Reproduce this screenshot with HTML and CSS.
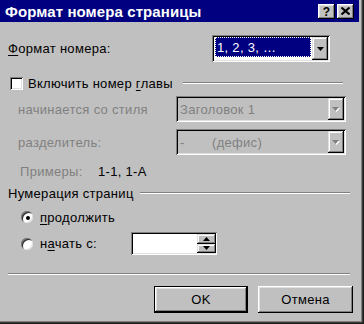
FILE: index.html
```html
<!DOCTYPE html>
<html lang="ru">
<head>
<meta charset="utf-8">
<title>Формат номера страницы</title>
<link rel="stylesheet" href="styles.css">
</head>
<body>
<div class="window">
  <div class="titlebar">
    <span class="title">Формат номера страницы</span>
    <div class="tb-buttons">
      <span class="tb-btn tb-help">?</span>
      <span class="tb-btn tb-close">
        <svg width="9" height="8" viewBox="0 0 9 8"><path d="M0.5 0.5L8.5 7.5M8.5 0.5L0.5 7.5" stroke="#000" stroke-width="2"/></svg>
      </span>
    </div>
  </div>
  <div class="content">
    <div class="row row-format">
      <span class="label-format"><u>Ф</u>ормат номера:</span>
      <div class="combo combo-focus">
        <div class="combo-field"><span class="sel">1, 2, 3, …</span></div>
        <div class="drop"><svg width="7" height="4" viewBox="0 0 7 4"><polygon points="0,0 7,0 3.5,4" fill="#000"/></svg></div>
      </div>
    </div>

    <div class="row row-group-chapter">
      <span class="checkbox"></span>
      <span class="check-label">Включить номер <u>г</u>лавы</span>
      <span class="groupline line-chapter"></span>
    </div>

    <div class="row row-disabled first">
      <span class="label-disabled">начинается со стиля</span>
      <div class="combo combo-disabled">
        <div class="combo-field"><span class="dis-text">Заголовок 1</span></div>
        <div class="drop"><svg width="8" height="5" viewBox="0 0 8 5"><polygon points="1,1 8,1 4.5,5" fill="#fff"/><polygon points="0,0 7,0 3.5,4" fill="#808080"/></svg></div>
      </div>
    </div>

    <div class="row row-disabled second">
      <span class="label-disabled">разделитель:</span>
      <div class="combo combo-disabled">
        <div class="combo-field"><span class="dis-text"><span class="dash">-</span>(дефис)</span></div>
        <div class="drop"><svg width="8" height="5" viewBox="0 0 8 5"><polygon points="1,1 8,1 4.5,5" fill="#fff"/><polygon points="0,0 7,0 3.5,4" fill="#808080"/></svg></div>
      </div>
    </div>

    <div class="row row-examples">
      <span class="label-examples">Примеры:</span>
      <span class="value-examples">1-1, 1-А</span>
    </div>

    <div class="row row-group-numbering">
      <span class="group-title">Нумерация страниц</span>
      <span class="groupline line-numbering"></span>
    </div>

    <div class="row row-radio">
      <span class="radio checked"></span>
      <span class="radio-label"><u>п</u>родолжить</span>
    </div>

    <div class="row row-radio row-start">
      <span class="radio"></span>
      <span class="radio-label start-label">н<u>а</u>чать с:</span>
      <div class="spin">
        <div class="spin-field"></div>
        <div class="spin-buttons">
          <span class="spin-btn"><svg width="7" height="4" viewBox="0 0 7 4"><polygon points="0,4 7,4 3.5,0" fill="#000"/></svg></span>
          <span class="spin-btn"><svg width="7" height="4" viewBox="0 0 7 4"><polygon points="0,0 7,0 3.5,4" fill="#000"/></svg></span>
        </div>
      </div>
    </div>

    <div class="separator"></div>

    <div class="row row-buttons">
      <span class="button default"><span class="btn-face">OK</span></span>
      <span class="button"><span class="btn-face">Отмена</span></span>
    </div>
  </div>
</div>
</body>
</html>
```

FILE: styles.css
```css
html, body {
  margin: 0;
  padding: 0;
  background: #c0c0c0;
}

.window {
  width: 364px;
  height: 324px;
  background: #c0c0c0;
  box-sizing: border-box;
  font-family: "Liberation Sans", Arial, sans-serif;
  font-size: 13px;
  letter-spacing: 0.3px;
  color: #000;
  box-shadow: inset -1px -1px #1c1c1c, inset -2px -2px #3a3a3a, inset -3px -3px #808080;
  overflow: hidden;
}

u {
  text-decoration: underline;
  text-underline-offset: 2px;
}

/* Title bar */
.titlebar {
  width: 359px;
  height: 22px;
  background: #000080;
  display: flex;
  align-items: center;
  justify-content: space-between;
  padding: 0 5px 0 5px;
  box-sizing: border-box;
}

.title {
  color: #fff;
  font-weight: bold;
  font-size: 15px;
  letter-spacing: 0.1px;
}

.tb-buttons {
  display: flex;
  gap: 2px;
}

.tb-btn {
  width: 17px;
  height: 15px;
  background: #c0c0c0;
  box-shadow: inset -1px -1px #000, inset 1px 1px #fff, inset -2px -2px #808080, inset 2px 2px #dfdfdf;
  display: flex;
  align-items: center;
  justify-content: center;
  box-sizing: border-box;
}

.tb-help {
  font-weight: bold;
  font-size: 12px;
  line-height: 1;
  padding-top: 1px;
  letter-spacing: 0;
}

/* Content */
.content {
  padding-left: 8px;
}

.row {
  display: flex;
  align-items: center;
}

.row-format {
  margin-top: 13px;
  height: 27px;
}

.label-format {
  width: 204px;
}

.combo {
  display: flex;
  padding: 2px;
  box-sizing: border-box;
  box-shadow: inset 1px 1px #808080, inset -1px -1px #fff, inset 2px 2px #000, inset -2px -2px #dfdfdf;
}

.combo-focus {
  width: 118px;
  height: 27px;
  background: #fff;
}

.combo-field {
  flex: 1;
  display: flex;
  box-sizing: border-box;
}

.combo-focus .combo-field {
  padding: 0 1px 3px 1px;
}

.sel {
  flex: 1;
  background: #000080;
  color: #fff;
  display: flex;
  align-items: center;
  padding-left: 2px;
  outline: 1px dotted #fff;
  outline-offset: -1px;
}

.drop {
  width: 16px;
  background: #c0c0c0;
  box-shadow: inset -1px -1px #000, inset 1px 1px #dfdfdf, inset -2px -2px #808080, inset 2px 2px #fff;
  display: flex;
  align-items: center;
  justify-content: center;
}

.drop svg {
  display: block;
}

/* Chapter group */
.row-group-chapter {
  margin-top: 14px;
  height: 14px;
  padding-left: 2px;
}

.checkbox {
  width: 13px;
  height: 13px;
  background: #fff;
  box-sizing: border-box;
  box-shadow: inset 1px 1px #808080, inset -1px -1px #fff, inset 2px 2px #000, inset -2px -2px #dfdfdf;
}

.check-label {
  margin-left: 5px;
}

.groupline {
  height: 2px;
  border-top: 1px solid #808080;
  border-bottom: 1px solid #fff;
  box-sizing: border-box;
  flex: 1;
}

.line-chapter {
  margin-left: 10px;
  margin-right: 21px;
}

.row-disabled {
  height: 26px;
  padding-left: 10px;
}

.row-disabled.first {
  margin-top: 6px;
}

.row-disabled.second {
  margin-top: 7px;
}

.label-disabled {
  width: 158px;
  color: #808080;
}

.combo-disabled {
  width: 170px;
  height: 26px;
  background: #c0c0c0;
}

.combo-disabled .combo-field {
  align-items: center;
  padding-left: 2px;
}

.dis-text {
  color: #808080;
}

.dash {
  display: inline-block;
  width: 32px;
}

.row-examples {
  margin-top: 8px;
  height: 16px;
  padding-left: 12px;
}

.label-examples {
  width: 78px;
  color: #808080;
}

.row-group-numbering {
  margin-top: 6px;
  height: 16px;
}

.line-numbering {
  margin-left: 6px;
  margin-right: 14px;
}

.row-radio {
  margin-top: 8px;
  height: 16px;
  padding-left: 13px;
}

.radio {
  width: 12px;
  height: 12px;
  border-radius: 50%;
  background: #fff;
  box-sizing: border-box;
  box-shadow: inset 1px 1px #808080, inset -1px -1px #dfdfdf, inset 2px 2px #303030;
  display: flex;
  align-items: center;
  justify-content: center;
}

.radio.checked::after {
  content: "";
  width: 4px;
  height: 4px;
  border-radius: 50%;
  background: #000;
  margin: 1px 0 0 1px;
}

.radio-label {
  margin-left: 7px;
}

.row-start {
  margin-top: 7px;
  height: 23px;
}

.start-label {
  width: 91px;
}

.spin {
  width: 86px;
  height: 23px;
  display: flex;
  padding: 2px 1px 2px 2px;
  box-sizing: border-box;
  background: #fff;
  box-shadow: inset 1px 1px #808080, inset -1px -1px #fff, inset 2px 2px #000, inset -2px -2px #dfdfdf;
}

.spin-field {
  flex: 1;
}

.spin-buttons {
  width: 19px;
  display: flex;
  flex-direction: column;
}

.spin-btn {
  flex: 1;
  background: #c0c0c0;
  box-shadow: inset -1px -1px #000, inset 1px 1px #dfdfdf, inset -2px -2px #808080, inset 2px 2px #fff;
  display: flex;
  align-items: center;
  justify-content: center;
}

.spin-btn svg {
  display: block;
}

.separator {
  margin-top: 18px;
  width: 342px;
  height: 2px;
  border-top: 1px solid #808080;
  border-bottom: 1px solid #fff;
  box-sizing: border-box;
}

.row-buttons {
  margin-top: 11px;
  height: 27px;
  justify-content: flex-end;
  padding-right: 11px;
  gap: 10px;
}

.button {
  width: 95px;
  height: 27px;
  box-sizing: border-box;
  display: flex;
}

.button.default {
  width: 94px;
  border: 1px solid #000;
}

.btn-face {
  flex: 1;
  display: flex;
  align-items: center;
  justify-content: center;
  background: #c0c0c0;
  box-shadow: inset -1px -1px #000, inset 1px 1px #fff, inset -2px -2px #808080, inset 2px 2px #dfdfdf;
}
```
